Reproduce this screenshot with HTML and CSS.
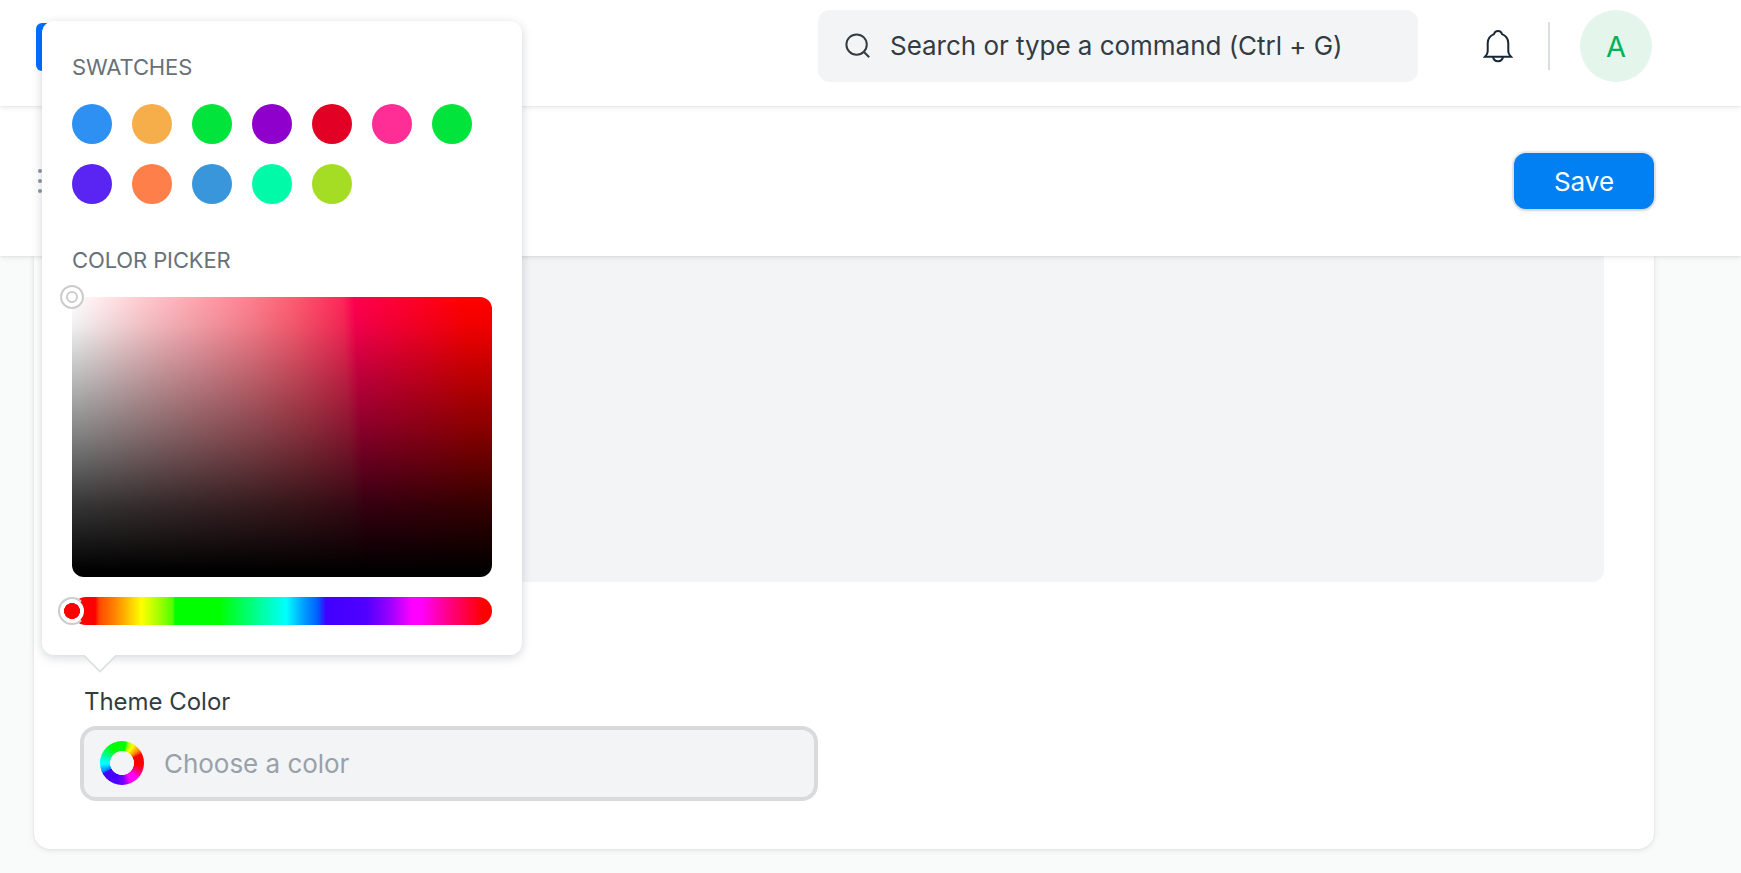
FILE: index.html
```html
<!DOCTYPE html>
<html lang="en">
<head>
<meta charset="utf-8">
<title>Theme Color</title>
<link rel="stylesheet" href="styles.css">
</head>
<body>
<header class="navbar">
  <span class="logo"></span>
  <div class="nav-right">
    <div class="search">
      <svg class="search-icon" viewBox="0 0 26 26"><circle cx="11.6" cy="11.6" r="10.2"/><path d="M19 19l5.2 5.2"/></svg>
      <span class="search-text">Search or type a command (Ctrl + G)</span>
    </div>
    <svg class="bell" viewBox="0 0 30 34"><path d="M15 2c2.100 0 3.500 1.200 4 3.100 4 1.600 6.300 4.700 6.300 9.100v8.300c0 1.700.9 3.400 2.700 5.200H2c1.800-1.800 2.700-3.500 2.700-5.200v-8.300c0-4.400 2.300-7.500 6.300-9.100C11.500 3.200 12.900 2 15 2z"/><path d="M10 28c.5 2.700 2.500 4.300 5 4.300s4.500-1.600 5-4.300"/></svg>
    <span class="divider"></span>
    <span class="avatar">A</span>
  </div>
</header>
<section class="page-head">
  <svg class="menu-dots" viewBox="0 0 8 26"><g fill="#8d99a6"><circle cx="3" cy="3" r="2"/><circle cx="3" cy="13" r="2"/><circle cx="3" cy="23" r="2"/></g></svg>
  <button class="save">Save</button>
</section>
<main class="card">
  <div class="preview"></div>
  <div class="field">
    <label class="label">Theme Color</label>
    <div class="input"><span class="wheel"></span><span>Choose a color</span></div>
  </div>
</main>
<div class="popover">
  <h2 class="heading">SWATCHES</h2>
  <div class="swatches">
    <i class="swatch blue"></i><i class="swatch orange"></i><i class="swatch green"></i><i class="swatch purple"></i><i class="swatch red"></i><i class="swatch pink"></i><i class="swatch green"></i>
    <i class="swatch violet"></i><i class="swatch coral"></i><i class="swatch sky"></i><i class="swatch mint"></i><i class="swatch lime"></i>
  </div>
  <h2 class="heading picker-heading">COLOR PICKER</h2>
  <div class="color-map"><span class="map-handle"></span></div>
  <div class="hue"><span class="hue-handle"></span></div>
  <svg class="arrow" viewBox="0 0 34 18"><path class="arrow-fill" d="M0 0h34L17 17z"/><path class="arrow-line" d="M.5 0L17 16.500 33.500 0"/></svg>
</div>
</body>
</html>
```
FILE: styles.css
```css
* { box-sizing: border-box; }
body {
  margin: 0;
  height: 873px;
  overflow: hidden;
  background: #f9fafa;
  font-family: Inter, "Liberation Sans", sans-serif;
  font-size: 26px;
  letter-spacing: -0.03px;
  color: #333c44;
}
svg { display: block; fill: none; }
.navbar, .page-head {
  position: relative;
  display: flex;
  align-items: center;
  justify-content: space-between;
  background: #fff;
  box-shadow: 0 1px 6px rgba(0, 0, 0, .1), 0 0 2px rgba(0, 0, 0, .08);
}
.navbar { height: 106px; padding: 0 89px 14px 36px; z-index: 2; }
.logo { width: 48px; height: 48px; margin-top: 2px; border-radius: 6px; background: #0070ff; }
.nav-right { display: flex; align-items: center; }
.search {
  display: flex;
  align-items: center;
  width: 600px;
  height: 72px;
  padding-left: 27px;
  gap: 19px;
  border-radius: 12px;
  background: #f3f4f6;
  white-space: nowrap;
}
.search-icon { width: 26px; height: 26px; stroke: #333c44; stroke-width: 2; }
.search-text { padding-bottom: 1px; }
.bell { width: 30px; height: 34px; margin-left: 65px; stroke: #192734; stroke-width: 2; }
.divider { width: 2px; height: 48px; margin: 0 30px 0 35px; background: #d9dee2; }
.avatar {
  display: flex;
  align-items: center;
  justify-content: center;
  width: 72px;
  height: 72px;
  border-radius: 50%;
  background: #e4f5eb;
  color: #00b159;
  font-size: 29px;
  letter-spacing: 0;
}
.page-head { height: 150px; padding: 0 87px 0 37px; z-index: 1; }
.menu-dots { width: 8px; height: 26px; }
.save {
  width: 140px;
  height: 56px;
  padding: 1px 0 0;
  border: 0;
  border-radius: 12px;
  background: #0080f2;
  box-shadow: 0 0 0 2px rgba(0, 0, 0, .06), 0 1px 4px rgba(0, 0, 0, .18);
  color: #fff;
  font: inherit;
  letter-spacing: inherit;
}
.card {
  width: 1620px;
  height: 593px;
  margin-left: 34px;
  padding: 0 50px;
  border-radius: 0 0 16px 16px;
  background: #fff;
  box-shadow: 0 1px 6px rgba(0, 0, 0, .1), 0 0 2px rgba(0, 0, 0, .08);
}
.preview { height: 326px; border-radius: 0 0 12px 12px; background: #f3f4f6; }
.field { width: 730px; padding-top: 105px; }
.label { display: block; font-size: 24px; line-height: 30px; }
.input {
  display: flex;
  align-items: center;
  height: 67px;
  margin-top: 13px;
  padding-left: 16px;
  gap: 20px;
  border-radius: 12px;
  background: #f3f4f6;
  box-shadow: 0 0 0 4px #d9dadc;
  color: #98a1a9;
}
.wheel {
  width: 44px;
  height: 44px;
  margin-bottom: 1px;
  border-radius: 50%;
  background:
    radial-gradient(circle, #f3f4f6 11.700px, transparent 12.300px),
    conic-gradient(#00ff00 0 3%, #a0ff00 5%, #ffff00 9%, #ff8000 15%, #ff2000 17.500%, #ff0000 18% 27%, #ff0080 33%, #ff00ff 38% 43%, #8000ff 48%, #4800ff 55% 66.500%, #0080ff 68%, #00ffff 74% 76%, #00ff80 83%, #00ff20 89%, #00ff00 91%);
}
.popover {
  position: absolute;
  z-index: 3;
  left: 42px;
  top: 21px;
  width: 480px;
  height: 634px;
  padding: 30px;
  border-radius: 12px;
  background: #fff;
  box-shadow: 0 2px 8px rgba(30, 40, 60, .15), 0 4px 16px rgba(30, 40, 60, .05);
}
.heading {
  margin: 0;
  color: #687178;
  font-size: 22px;
  font-weight: 400;
  line-height: 32px;
  letter-spacing: -0.12px;
}
.swatches { display: grid; grid-template-columns: repeat(7, 40px); gap: 20px; margin-top: 21px; }
.swatch { height: 40px; border-radius: 50%; }
.blue { background: #2f90f3; }
.orange { background: #f6ae4a; }
.green { background: #00e43c; }
.purple { background: #8f00cc; }
.red { background: #e20025; }
.pink { background: #ff2d96; }
.violet { background: #5a24f2; }
.coral { background: #ff7f4a; }
.sky { background: #3996da; }
.mint { background: #00faa8; }
.lime { background: #a5dd24; }
.picker-heading { margin-top: 40px; }
.color-map {
  position: relative;
  height: 280px;
  margin-top: 21px;
  border-radius: 12px;
  background:
    linear-gradient(rgba(0, 0, 0, 0), rgba(0, 0, 0, .06) 10%, rgba(0, 0, 0, .5) 50%, rgba(0, 0, 0, .8) 75%, #000 98%),
    linear-gradient(87deg, #fff 3.400%, #ffc6cb 20.800%, #ff818f 44%, #ff5a70 54.600%, #ff2858 65.500%, #ff0050 68.300%, #ff0028 81.700%, #ff0000 94%);
}
.map-handle {
  position: absolute;
  left: -12px;
  top: -12px;
  width: 24px;
  height: 24px;
  border: 2px solid #ccc;
  border-radius: 50%;
  background: #fff;
}
.map-handle::after {
  content: "";
  position: absolute;
  inset: 4px;
  border: 2px solid #ccc;
  border-radius: 50%;
}
.hue {
  position: relative;
  height: 28px;
  margin-top: 20px;
  border-radius: 14px;
  background: linear-gradient(90deg, #f00 5.500%, #ff4800 6.500%, #ff8000 10%, #ff0 16.500%, #a8ff00 20.500%, #50ff00 24%, #0f0 24.500% 35%, #00ff80 43%, #0ff 51%, #00a0ff 55%, #0060ff 58.500%, #4000ff 60.500%, #5000ff 70%, #9800ff 75.500%, #f0f 81% 83%, #ff0080 90%, #f00 98%);
}
.hue-handle {
  position: absolute;
  left: -14px;
  top: 0;
  width: 28px;
  height: 28px;
  border: 2px solid #ccc;
  border-right-color: #f00;
  border-radius: 50%;
  background: radial-gradient(circle, #f00 7.700px, #fff 8.300px);
}
.arrow { position: absolute; left: 41px; top: 634px; width: 34px; height: 18px; }
.arrow-fill { fill: #fff; }
.arrow-line { stroke: #dcdfe2; stroke-width: 1.600; }
```
